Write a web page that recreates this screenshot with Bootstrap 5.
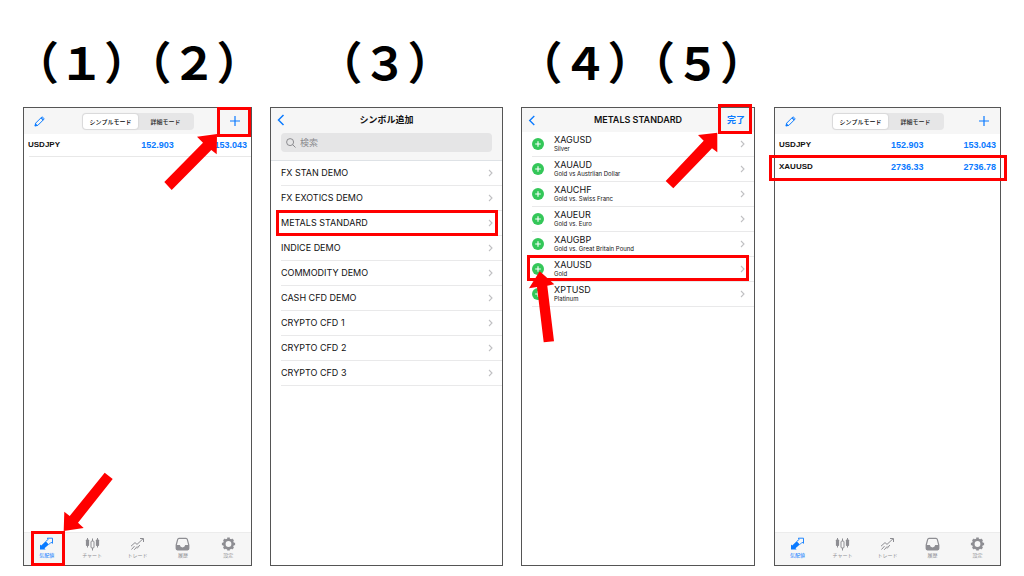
<!DOCTYPE html>
<html lang="ja">
<head>
<meta charset="utf-8">
<meta name="viewport" content="width=device-width, initial-scale=1">
<title>シンボル追加</title>
<link rel="stylesheet" href="https://cdn.jsdelivr.net/npm/bootstrap@5.3.0/dist/css/bootstrap.min.css">
<script src="https://cdn.jsdelivr.net/npm/bootstrap@5.3.0/dist/js/bootstrap.bundle.min.js"></script>
<style>
body{background:#fff;color:#111;font:9px/12px Inter,"Noto Sans CJK JP",sans-serif}
a{color:inherit;text-decoration:none}
.steps{padding:31px 0 17px 14px}
.steps h2{font:700 45px/59px "Noto Sans CJK JP",sans-serif;color:#000;margin:0;white-space:nowrap}
.step-b{padding-left:56px}
.step-c{padding-left:65px}
.screens{display:grid;grid-template-columns:229fr 233fr 234fr 228fr;gap:18px;padding:0 23px 10px}
.phone{border:1px solid #555;min-width:0}
.phone:last-of-type{margin-left:1px}
.bar-top{background:#f6f6f6}
.tools{height:26px;padding:0 10px}
.blue,.blue:hover{color:#0a7aff}
.ghost{border:0;background:none;padding:0;line-height:0}
.seg{background:#e6e6e7;border-radius:4px;width:112px;padding:1px;margin-left:2px}
.seg button{border:0;background:none;border-radius:3px;width:50%;height:15px;padding:0;font-size:6px;line-height:15px;font-weight:500;color:#222;white-space:nowrap}
.seg button.on{background:#fff;box-shadow:0 0 2px #0003;color:#000}
.quotes{width:100%;table-layout:fixed;font:700 9px/14px "Liberation Sans",sans-serif}
.quotes th,.quotes td{height:22px;padding:0;text-align:right}
.quotes th{text-align:left;padding-left:4px;font-size:8px;width:36%}
.quotes td:nth-child(2){width:30%}
.quotes td:last-child{padding-right:4px}
.rule{height:1px;background:#e8e8e8;margin-left:5px}
.tabs5{background:#f6f6f6;height:33px;border-top:1px solid #ececec;color:#8e8e93}
.tabs5 a{flex:1 1 0;text-align:center;font-size:5px;line-height:8px;padding-top:4px}
.tabs5 svg{display:block;margin:0 auto}
.nav-row{height:24px;padding:0 6px}
.nav-row h3{font-size:9px;line-height:12px;font-weight:600;margin:0}
.nav-row .side{width:24px}
.nav-row .done{font-weight:600}
.find{background:#e5e5e6;border-radius:4px;height:19px;margin:1px 10px 8px;padding:0 5px;gap:4px}
.find input{border:0;background:none;outline:0;padding:0;font-size:9px;line-height:12px;width:100%;color:#555}
.find input::placeholder{color:#8a8a8e;opacity:1}
.line-item{height:25px;margin-left:10px;padding-right:9px;border-bottom:1px solid #e9e9ea}
.names{margin-left:10px;margin-right:auto}
.code{font-size:9px;line-height:10px}
.about{font-size:6px;line-height:8px}
.mark-box{position:absolute;border:3px solid red;pointer-events:none;z-index:2}
.arrow{position:absolute;z-index:3;fill:red;pointer-events:none}
.mark-plus{right:0;top:-1px;width:34px;height:30px}
.arrow-plus{right:34px;top:25px}
.mark-tab{left:7px;bottom:-1px;width:34px;height:35px}
.arrow-tab{left:39px;bottom:33px}
.mark-group{left:5px;right:4px;top:102px;height:26px}
.mark-done{right:2px;top:-4px;width:34px;height:30px}
.arrow-done{right:36px;top:24px}
.mark-gold{left:5px;right:5px;top:147px;height:26px}
.arrow-gold{left:6px;top:163px}
.mark-quote{left:-6px;right:-7px;top:47px;height:26px}
</style>
</head>
<body class="min-vh-100 d-flex flex-column">
<svg class="d-none" xmlns="http://www.w3.org/2000/svg">
<symbol id="pencil" viewBox="0 0 10 10"><path d="M.9 9.1 1.5 6.5 6.7 1.3Q7.5.6 8.3 1.4L8.6 1.7Q9.4 2.5 8.7 3.3L3.5 8.5Z" fill="none" stroke="currentColor" stroke-width=".9"/><path d="m.6 9.4.7-2.9 2.2 2.2ZM5.9 1.9l.8-.8 2.2 2.2-.8.8Z" fill="currentColor"/></symbol>
<symbol id="plus" viewBox="0 0 10 10"><path d="M5 0v10M0 5h10" stroke="currentColor" stroke-width="1.2"/></symbol>
<symbol id="back" viewBox="0 0 8 12"><path d="M6.5 1 1.5 6l5 5" fill="none" stroke="currentColor" stroke-width="1.5"/></symbol>
<symbol id="next" viewBox="0 0 5 8"><path d="m1 1 3 3-3 3" fill="none" stroke="#c0c0c3" stroke-width="1.1"/></symbol>
<symbol id="lens" viewBox="0 0 10 10"><g fill="none" stroke="#808084" stroke-width=".9"><circle cx="4.1" cy="4.1" r="3.5"/><path d="m6.7 6.7 2.8 2.8"/></g></symbol>
<symbol id="add" viewBox="0 0 12 12"><circle cx="6" cy="6" r="6" fill="#34c759"/><path d="M6 3.2v5.6M3.2 6h5.6" stroke="#fff" stroke-width="1.1"/></symbol>
<symbol id="t1" viewBox="0 0 15 14"><path d="M1 12.500V7.500l1.200 1 4.500-4.200L9.800 7.400 5.500 11.300 6.600 12.500Z" fill="currentColor"/><path d="M6.800 4.400 9.200 2.400 8.300 1.200h5.200v5.100l-1.400-1-2.300 2.300" fill="none" stroke="currentColor" stroke-width=".9"/></symbol>
<symbol id="t2" viewBox="0 0 15 14"><path d="M2.500 1v9.500M12.500 1v9.500M7.500 1.500v12" stroke="currentColor" stroke-width="1"/><rect x=".9" y="2.500" width="3.200" height="6.500" rx=".8" fill="currentColor"/><rect x="10.900" y="2.500" width="3.200" height="6.500" rx=".8" fill="currentColor"/><rect x="6" y="4" width="3" height="7" rx="1" fill="#f6f6f6" stroke="currentColor" stroke-width="1"/></symbol>
<symbol id="t3" viewBox="0 0 15 14"><path d="M1 9.200 5 5.600l2 1.800 6-5.600M10 1.500h3.500V5M1.500 12.500l3-3.400M4.200 12.800l3-3.400M7.100 11.500 9.800 8" fill="none" stroke="currentColor" stroke-width="1"/></symbol>
<symbol id="t4" viewBox="0 0 15 14"><path d="M1.200 8 2.700 2.400Q3 1.300 4 1.300h7q1 0 1.300 1.100L13.800 8v3.600q0 1.200-1.200 1.200H2.400q-1.200 0-1.200-1.200Z" fill="none" stroke="currentColor" stroke-width="1.200"/><path d="M1 8h3.800q.4 2.400 2.700 2.400T10.200 8H14v3.600q0 1.400-1.400 1.400H2.400Q1 13 1 11.600Z" fill="currentColor"/></symbol>
<symbol id="t5" viewBox="0 0 15 14"><circle cx="7.500" cy="7" r="4.200" fill="none" stroke="currentColor" stroke-width="2.600"/><path d="M7.500.4v2.300M7.500 11.300v2.300M.9 7h2.300M11.800 7h2.300M2.900 2.400l1.600 1.600M10.500 10l1.600 1.600M2.900 11.600 4.500 10M10.500 4l1.600-1.600" stroke="currentColor" stroke-width="2.600"/></symbol>
</svg>

<header class="steps d-flex">
<h2>（１）（２）</h2>
<h2 class="step-b">（３）</h2>
<h2 class="step-c">（４）（５）</h2>
</header>

<main class="screens flex-grow-1">
<section class="phone position-relative d-flex flex-column">
  <div class="bar-top tools d-flex align-items-center justify-content-between">
    <button class="ghost blue" aria-label="編集"><svg width="11" height="11"><use href="#pencil"/></svg></button>
    <div class="seg d-flex"><button class="on">シンプルモード</button><button>詳細モード</button></div>
    <button class="ghost blue" aria-label="追加"><svg width="12" height="10"><use href="#plus"/></svg></button>
  </div>
  <table class="quotes"><tr><th>USDJPY</th><td class="blue">152.903</td><td class="blue">153.043</td></tr></table>
  <div class="rule"></div>
  <nav class="tabs5 d-flex mt-auto">
    <a href="#" class="blue"><svg width="15" height="14"><use href="#t1"/></svg>気配値</a>
    <a href="#"><svg width="15" height="14"><use href="#t2"/></svg>チャート</a>
    <a href="#"><svg width="15" height="14"><use href="#t3"/></svg>トレード</a>
    <a href="#"><svg width="15" height="14"><use href="#t4"/></svg>履歴</a>
    <a href="#"><svg width="15" height="14"><use href="#t5"/></svg>設定</a>
  </nav>
  <div class="mark-box mark-plus"></div>
  <svg class="arrow arrow-plus" width="53" height="58" viewBox="164 133 53 58"><path d="M217 134 197 136.700 203 142.700 164.300 182 171.700 190 211.300 150 216.700 154.300Z"/></svg>
  <div class="mark-box mark-tab"></div>
  <svg class="arrow arrow-tab" width="51" height="60" viewBox="63 472 51 60"><path d="M63.700 531 64.300 511.700 69.700 516 104.700 472.700 112.700 479 78 522.700 83.700 528Z"/></svg>
</section>

<section class="phone position-relative">
  <div class="bar-top border-bottom">
    <div class="nav-row d-flex align-items-center justify-content-between">
      <button class="ghost blue side text-start" aria-label="戻る"><svg width="8" height="12"><use href="#back"/></svg></button>
      <h3>シンボル追加</h3><span class="side"></span>
    </div>
    <label class="find d-flex align-items-center"><svg class="flex-shrink-0" width="10" height="10"><use href="#lens"/></svg><input type="text" placeholder="検索" aria-label="検索"></label>
  </div>
  <a href="#" class="line-item d-flex align-items-center justify-content-between">FX STAN DEMO<svg width="5" height="8"><use href="#next"/></svg></a>
  <a href="#" class="line-item d-flex align-items-center justify-content-between">FX EXOTICS DEMO<svg width="5" height="8"><use href="#next"/></svg></a>
  <a href="#" class="line-item d-flex align-items-center justify-content-between">METALS STANDARD<svg width="5" height="8"><use href="#next"/></svg></a>
  <a href="#" class="line-item d-flex align-items-center justify-content-between">INDICE DEMO<svg width="5" height="8"><use href="#next"/></svg></a>
  <a href="#" class="line-item d-flex align-items-center justify-content-between">COMMODITY DEMO<svg width="5" height="8"><use href="#next"/></svg></a>
  <a href="#" class="line-item d-flex align-items-center justify-content-between">CASH CFD DEMO<svg width="5" height="8"><use href="#next"/></svg></a>
  <a href="#" class="line-item d-flex align-items-center justify-content-between">CRYPTO CFD 1<svg width="5" height="8"><use href="#next"/></svg></a>
  <a href="#" class="line-item d-flex align-items-center justify-content-between">CRYPTO CFD 2<svg width="5" height="8"><use href="#next"/></svg></a>
  <a href="#" class="line-item d-flex align-items-center justify-content-between">CRYPTO CFD 3<svg width="5" height="8"><use href="#next"/></svg></a>
  <div class="mark-box mark-group"></div>
</section>

<section class="phone position-relative">
  <div class="bar-top nav-row d-flex align-items-center justify-content-between">
    <button class="ghost blue side text-start" aria-label="戻る"><svg width="8" height="11"><use href="#back"/></svg></button>
    <h3>METALS STANDARD</h3>
    <button class="ghost blue side done">完了</button>
  </div>
  <a href="#" class="line-item d-flex align-items-center"><svg width="12" height="12"><use href="#add"/></svg><span class="names"><span class="code d-block">XAGUSD</span><span class="about d-block">Silver</span></span><svg width="5" height="8"><use href="#next"/></svg></a>
  <a href="#" class="line-item d-flex align-items-center"><svg width="12" height="12"><use href="#add"/></svg><span class="names"><span class="code d-block">XAUAUD</span><span class="about d-block">Gold vs Austrlian Dollar</span></span><svg width="5" height="8"><use href="#next"/></svg></a>
  <a href="#" class="line-item d-flex align-items-center"><svg width="12" height="12"><use href="#add"/></svg><span class="names"><span class="code d-block">XAUCHF</span><span class="about d-block">Gold vs. Swiss Franc</span></span><svg width="5" height="8"><use href="#next"/></svg></a>
  <a href="#" class="line-item d-flex align-items-center"><svg width="12" height="12"><use href="#add"/></svg><span class="names"><span class="code d-block">XAUEUR</span><span class="about d-block">Gold vs. Euro</span></span><svg width="5" height="8"><use href="#next"/></svg></a>
  <a href="#" class="line-item d-flex align-items-center"><svg width="12" height="12"><use href="#add"/></svg><span class="names"><span class="code d-block">XAUGBP</span><span class="about d-block">Gold vs. Great Britain Pound</span></span><svg width="5" height="8"><use href="#next"/></svg></a>
  <a href="#" class="line-item d-flex align-items-center"><svg width="12" height="12"><use href="#add"/></svg><span class="names"><span class="code d-block">XAUUSD</span><span class="about d-block">Gold</span></span><svg width="5" height="8"><use href="#next"/></svg></a>
  <a href="#" class="line-item d-flex align-items-center"><svg width="12" height="12"><use href="#add"/></svg><span class="names"><span class="code d-block">XPTUSD</span><span class="about d-block">Platinum</span></span><svg width="5" height="8"><use href="#next"/></svg></a>
  <div class="mark-box mark-done"></div>
  <svg class="arrow arrow-done" width="53" height="58" viewBox="665 132 53 58"><path d="M717.300 132.700 698 135 703.700 140.700 665.700 181 673.300 188.300 712 148.300 717.300 152.300Z"/></svg>
  <div class="mark-box mark-gold"></div>
  <svg class="arrow arrow-gold" width="28" height="73" viewBox="528 271 28 73"><path d="M539.700 271.300 529 288.300 537 287 543.700 342.300 554 341.300 547.300 285.700 554.300 284.300Z"/></svg>
</section>

<section class="phone position-relative d-flex flex-column">
  <div class="bar-top tools d-flex align-items-center justify-content-between">
    <button class="ghost blue" aria-label="編集"><svg width="11" height="11"><use href="#pencil"/></svg></button>
    <div class="seg d-flex"><button class="on">シンプルモード</button><button>詳細モード</button></div>
    <button class="ghost blue" aria-label="追加"><svg width="12" height="10"><use href="#plus"/></svg></button>
  </div>
  <table class="quotes"><tr><th>USDJPY</th><td class="blue">152.903</td><td class="blue">153.043</td></tr><tr><th>XAUUSD</th><td class="blue">2736.33</td><td class="blue">2736.78</td></tr></table>
  <nav class="tabs5 d-flex mt-auto">
    <a href="#" class="blue"><svg width="15" height="14"><use href="#t1"/></svg>気配値</a>
    <a href="#"><svg width="15" height="14"><use href="#t2"/></svg>チャート</a>
    <a href="#"><svg width="15" height="14"><use href="#t3"/></svg>トレード</a>
    <a href="#"><svg width="15" height="14"><use href="#t4"/></svg>履歴</a>
    <a href="#"><svg width="15" height="14"><use href="#t5"/></svg>設定</a>
  </nav>
  <div class="mark-box mark-quote"></div>
</section>
</main>
</body>
</html>
